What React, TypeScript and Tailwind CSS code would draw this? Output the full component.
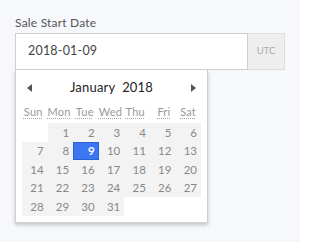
const weekdays = ["Sun", "Mon", "Tue", "Wed", "Thu", "Fri", "Sat"];

// January 2018 starts on a Monday
const cells: (number | null)[] = [null, ...Array.from({ length: 31 }, (_, i) => i + 1)];
while (cells.length % 7 !== 0) cells.push(null);

const App = () => {
  return (
    <div
      className="h-[242px] w-[300px] bg-[#f6f8fc] px-[15px] pt-[16px]"
      style={{ fontFamily: "Lato, 'Open Sans', sans-serif" }}
    >
      <div className="mb-[3px] text-[12px] leading-[14px] tracking-[0.2px] text-[#555]">Sale Start Date</div>

      <div className="flex h-[37px]">
        <div className="flex w-[233px] items-center border border-[#cfcfcf] bg-white pl-[12px] text-[12.5px] tracking-[0.2px] text-[#444]">
          2018-01-09
        </div>
        <div className="flex w-[37px] items-center justify-center border border-l-0 border-[#dedede] bg-[#eeeeee] text-[9.5px] text-[#aaa]">
          UTC
        </div>
      </div>

      <div className="w-[193px] border border-t-0 border-[#cfcfcf] bg-white px-[6px] pb-[6px] pt-[5px] shadow-[0_2px_4px_rgba(0,0,0,0.22)]">
        <div className="flex h-[26px] items-center justify-between px-[5px]">
          <svg width="5" height="8" viewBox="0 0 5 8">
            <path d="M5 0 L0 4 L5 8 Z" fill="#555" />
          </svg>
          <div className="text-[13px] tracking-[0.2px] text-[#222]">
            January&nbsp;&nbsp;2018
          </div>
          <svg width="5" height="8" viewBox="0 0 5 8">
            <path d="M0 0 L5 4 L0 8 Z" fill="#555" />
          </svg>
        </div>

        <div className="grid h-[22px] grid-cols-7 items-center pt-[1px]">
          {weekdays.map((d) => (
            <div key={d} className="pr-[5px] text-right text-[11px] tracking-[0.2px] text-[#999]">
              <abbr className="underline decoration-dotted decoration-[#aaa] underline-offset-2">{d}</abbr>
            </div>
          ))}
        </div>

        <div className="grid grid-cols-7">
          {cells.map((n, i) =>
            n === null ? (
              <div key={i} className="h-[18.5px]" />
            ) : n === 9 ? (
              <div
                key={i}
                className="flex h-[18.5px] items-center justify-end border border-[#2a5fd6] bg-[#3d76f2] pr-[3px] text-[11.5px] font-bold text-white"
              >
                {n}
              </div>
            ) : (
              <div
                key={i}
                className="flex h-[18.5px] items-center justify-end bg-[#f3f3f3] pr-[4px] text-[11.5px] text-[#888]"
              >
                {n}
              </div>
            )
          )}
        </div>
      </div>
    </div>
  );
};

export default App;
